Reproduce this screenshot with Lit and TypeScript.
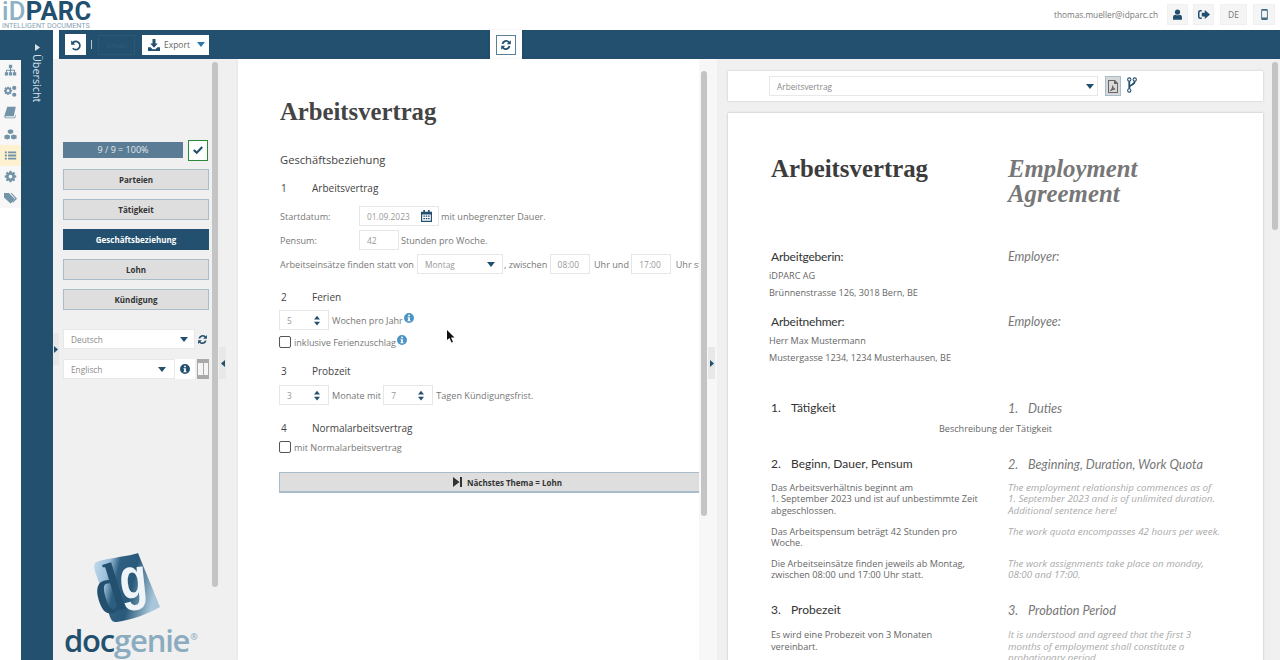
import { LitElement, html, css, svg } from "lit";
import { customElement } from "lit/decorators.js";

const ic = (w: number, h: number, vb: string, body: unknown, cls = "") =>
  html`<svg class="ic ${cls}" width=${w} height=${h} viewBox=${vb} fill="currentColor">${body}</svg>`;

const refresh = (s = 12) => ic(s, s, "0 0 16 16", svg`
  <path d="M2.2 6.6A6 6 0 0 1 12.6 3.4L14.4 1.6V7H9L11 5A3.7 3.7 0 0 0 4.6 6.6Z"/>
  <path d="M13.8 9.4A6 6 0 0 1 3.4 12.6L1.6 14.4V9H7L5 11A3.7 3.7 0 0 0 11.4 9.4Z"/>`);
const caret = () => ic(8, 5, "0 0 8 5", svg`<path d="M0 0H8L4 5Z"/>`, "caret");
const info = (s = 11) => ic(s, s, "0 0 16 16", svg`
  <path fill-rule="evenodd" d="M8 0a8 8 0 1 1 0 16A8 8 0 0 1 8 0ZM6.6 2.6v2.6h2.8V2.6ZM5.6 6.6v1.6h1v3.2h-1V13h4.8v-1.6h-1V6.6Z"/>`);
const spin = () => ic(6, 11, "0 0 8 13", svg`<path d="M0 5L4 0L8 5ZM0 8H8L4 13Z"/>`, "spin");

const railIcons = [
  svg`<path d="M6 1h4v4H8.8v2H13.5v3H15v4h-4v-4h1.3V8.2H8.7V10H10v4H6v-4h1.3V8.2H3.7V10H5v4H1v-4h1.5V7H7.2V5H6Z"/>`,
  svg`<path fill-rule="evenodd" d="M6 3l1 .3.8-.7 1.4 1.4-.7.9.4 1 1.1.1v2l-1.1.2-.4 1 .7.9-1.4 1.4-.8-.7-1 .4-.2 1H4l-.1-1-1-.4-.9.7L.6 10.1l.7-.9-.4-1L0 8V6l.9-.1.4-1-.7-.9L2 2.6l.9.7 1-.3.1-1h2ZM5 5.2a1.8 1.8 0 1 0 0 3.6 1.8 1.8 0 0 0 0-3.6Z"/><circle cx="12.6" cy="3.6" r="2.6"/><circle cx="12.6" cy="12" r="2.6"/>`,
  svg`<path d="M4 1h10.5L12 12.5H2.5C1.6 12.5 1.4 14 2.4 14H13l.8-2.8.9.4L13.6 15H2.2C.6 15 .2 13.2.6 11.6Z"/>`,
  svg`<path d="M8 0.5l3.3 1.3v3.4L8 6.5 4.7 5.2V1.8ZM4 7l3.3 1.3v3.5L4 13.2.5 11.8V8.3ZM12 7l3.5 1.3v3.5L12 13.2l-3.3-1.4V8.3Z" transform="translate(0 1)"/>`,
  svg`<path d="M1 3h2.5v2.2H1Zm4 0h10v2.2H5ZM1 6.9h2.5v2.2H1Zm4 0h10v2.2H5ZM1 10.800h2.500V13H1Zm4 0h10V13H5Z"/>`,
  svg`<path fill-rule="evenodd" d="M6.800 1h2.400l.3 1.800 1.100.5 1.500-1 1.700 1.700-1 1.500.5 1.100 1.800.3v2.400l-1.800.3-.5 1.100 1 1.500-1.700 1.700-1.500-1-1.100.5-.3 1.800H6.800l-.3-1.800-1.100-.5-1.500 1-1.700-1.700 1-1.500-.5-1.100L.9 9.300V6.900l1.800-.3.5-1.100-1-1.500 1.700-1.700 1.500 1 1.100-.5ZM8 5.800a2.300 2.300 0 1 0 0 4.600 2.300 2.300 0 0 0 0-4.600Z"/>`,
  svg`<path d="M0 2.500h6l7.500 7.500-5.500 5.500L0 8Z" /><path d="M8 2.500h1.500L16 9.500l-5 5-1-1 4-4Z"/>`,
];

@customElement("app-root")
export class AppRoot extends LitElement {
  static styles = css`
    :host { display: block; width: 1280px; height: 660px; overflow: hidden; background: #fff;
      font-family: "Open Sans", sans-serif; color: #777; position: relative; }
    .ic { display: block; flex: none; }

    .top { height: 30px; display: flex; align-items: flex-start; justify-content: space-between; }
    .logo { padding: 0 0 0 2px; width: 100px; }
    .logo-main { font: 700 25.500px/23px "Roboto", sans-serif; letter-spacing: 0.3px; color: #23506f; height: 21px; white-space: nowrap; }
    .logo-main b { color: #8eb0c4; font-weight: 500; }
    .logo-sub { font: 400 7.200px/7px "Roboto", sans-serif; color: #8aa3b3; white-space: nowrap; margin-top: 1px; }
    .user { display: flex; align-items: center; gap: 5px; height: 21px; margin-top: 4px; padding-right: 5px; }
    .email { font-size: 8.300px; color: #777; margin-right: 4px; }
    .tbtn { width: 21px; height: 21px; background: #f5f5f5; display: flex; align-items: center; justify-content: center; color: #23506f; font-size: 8.500px; box-shadow: 0 0 0 1px #f0f0f0 inset; }
    .tbtn.de { width: 27px; color: #777; margin: 0 1px; }
    .tbtn.mob { width: 22px; color: #3f6b88; }

    .body { display: flex; height: 630px; }
    .rail { width: 21px; flex: none; display: flex; flex-direction: column; }
    .rail-top { height: 30px; background: #23506f; }
    .rail-item { height: 21.200px; display: flex; align-items: center; justify-content: center; color: #7393a8; background: #f7f7f7; }
    .rail-item.on { background: #fdf1cf; }
    .nav { width: 32px; flex: none; background: #23506f; color: #d7e2e9; display: flex; flex-direction: column; align-items: center; padding-top: 14px; box-sizing: border-box; }
    .nav-label { writing-mode: vertical-rl; font-size: 10.800px; margin-top: 3px; line-height: 16px; }

    .work { flex: 1; min-width: 0; display: flex; flex-direction: column; }
    .bar { height: 29px; margin-left: 6px; background: #23506f; display: flex; align-items: center; flex: none; padding-left: 6px; }
    .undo { width: 21px; height: 21px; background: #fff; color: #23506f; display: flex; align-items: center; justify-content: center; }
    .sep { width: 1px; height: 9px; background: #b8c8d3; margin: 0 6px 0 5px; }
    .ghost { width: 37px; height: 20px; border: 1px solid #2c5873; box-sizing: border-box; color: #2f5b76; font-size: 8px; display: flex; align-items: center; justify-content: center; margin-right: 7px; }
    .export { width: 67px; height: 20px; background: #fff; color: #23506f; display: flex; align-items: center; gap: 4px; padding-left: 6px; box-sizing: border-box; font-size: 8.500px; }
    .export span { color: #666; }
    .export .caret { color: #2a78a8; margin-left: 3px; }
    .syncwrap { width: 32px; height: 30px; background: #fff; margin-left: 281px; display: flex; align-items: center; justify-content: center; box-shadow: 0 1px 3px rgba(0,0,0,.15); align-self: flex-start; }
    .sync { width: 20px; height: 20px; border: 1px solid #5d7f96; box-sizing: border-box; color: #23506f; display: flex; align-items: center; justify-content: center; }

    .panels { flex: 1; display: flex; min-height: 0; position: relative; }
    .side { width: 165px; flex: none; background: #f0f0f0; padding: 0 0 0 10px; box-sizing: border-box; position: relative; display: flex; flex-direction: column; }
    .side-in { width: 146px; padding-top: 80px; display: flex; flex-direction: column; }
    .prog-row { display: flex; align-items: center; justify-content: space-between; height: 22px; margin-bottom: 8px; }
    .prog { width: 120px; height: 16px; background: #5a7c95; color: #e3eaee; font-size: 9px; text-align: center; line-height: 16px; }
    .check { width: 20px; height: 21px; background: #fff; border: 1px solid #2a8a3a; box-sizing: border-box; color: #23506f; display: flex; align-items: center; justify-content: center; margin-right: 1px; }
    .navbtn { height: 21px; box-sizing: border-box; background: #dedede; border: 1px solid #a9bcc9; color: #333; font-size: 8px; font-weight: 700; text-align: center; line-height: 19px; margin-bottom: 9px; }
    .navbtn.on { background: #23506f; border-color: #23506f; color: #fff; }
    .langs { margin-top: 10px; display: flex; flex-direction: column; gap: 10px; }
    .lang { height: 20px; display: flex; align-items: stretch; }
    .sel { background: #fff; border: 1px solid #e8e8e8; box-sizing: border-box; display: flex; align-items: center; justify-content: space-between; padding: 0 6px 0 7px; font-size: 8.300px; color: #8a8a8a; }
    .sel .caret { color: #23506f; }
    .lang .sel { flex: 1; }
    .lang .sel.short { padding-right: 8px; }
    .lang-btn { width: 13px; margin-left: 1px; display: flex; align-items: center; justify-content: center; color: #23506f; }
    .info-btn { width: 20px; background: #fff; display: flex; align-items: center; justify-content: center; color: #23506f; margin-right: 2px; }
    .pause { width: 12px; background: #a9a9a9; display: flex; align-items: center; justify-content: center; gap: 1px; }
    .pause i { width: 4.500px; height: 12px; background: #f5f5f5; display: block; }
    .dg-wrap { flex: 1; display: flex; flex-direction: column; align-items: flex-start; justify-content: flex-end; padding-bottom: 5px; margin-left: 1px; }
    .dg { display: block; margin-left: 29px; }
    .dg-name { font: 600 31px/30px "Open Sans", sans-serif; letter-spacing: -1.200px; color: #23506f; white-space: nowrap; margin-top: 1px; }
    .dg-name b { font-weight: 600; color: #8bacbf; }
    .dg-name sup { font-size: 9px; letter-spacing: 0; color: #8bacbf; vertical-align: 12px; line-height: 0; margin-left: 1px; }
    .thumb { position: absolute; width: 6px; background: #c4c4c4; border-radius: 3px; }
    .side .thumb { right: 0; top: 3px; height: 525px; }
    .handle { position: absolute; width: 7px; height: 32px; background: #e8e8e8; color: #23506f; display: flex; align-items: center; justify-content: center; }

    .gap { width: 20px; flex: none; background: #f0f0f0; }
    .main { width: 461px; flex: none; background: #fff; padding: 0 0 0 42px; box-sizing: border-box; overflow: hidden; white-space: nowrap; font-size: 9.100px; box-shadow: 0 0 3px rgba(0,0,0,.08); }
    .main h1 { font: 700 24.700px/30px "Liberation Serif", serif; color: #444; margin: 38px 0 0 0; }
    .main h2 { font-weight: 400; font-size: 11.200px; line-height: 18px; color: #444; margin: 24px 0 0 0; }
    .sec { display: flex; font-size: 10px; line-height: 16px; color: #444; margin-top: 11px; }
    .sec span:first-child { width: 32px; padding-left: 1px; box-sizing: border-box; }
    .row { display: flex; align-items: center; height: 24px; }
    .lab { width: 79px; flex: none; }
    .inp { height: 20px; border: 1px solid #e6e6e6; box-sizing: border-box; display: flex; align-items: center; justify-content: space-between; padding: 0 6px 0 7px; color: #999; font-size: 8.400px; background: #fff; flex: none; margin-right: 2px; }
    .inp .ic { color: #23506f; }
    .cal { color: #3f6b88 !important; }
    .w40 { width: 40px; } .w50 { width: 50px; padding-right: 8px; margin-right: 3px; } .w80 { width: 80px; } .w86 { width: 86px; color: #999; margin: 0 1px 0 3px; padding-right: 7px; }
    .inp.first { margin-left: -1px; }
    .chk { display: flex; align-items: center; height: 20px; margin-left: -1px; }
    .box { width: 12px; height: 12px; border: 1px solid #555; border-radius: 2px; box-sizing: border-box; margin-right: 3px; background: #fff; }
    .blue { color: #4d93c4; margin: -4px 0 0 1px; }
    .next { height: 21px; margin: 15px 0 0 -1px; width: 456px; background: #dedede; border: 1px solid #a9bcc9; border-bottom-width: 2px; border-right: 0; box-sizing: border-box; display: flex; align-items: center; justify-content: center; gap: 5px; color: #333; font-size: 8px; font-weight: 700; }

    .main-scroll { width: 18px; flex: none; background: #f7f7f7; position: relative; }
    .main-scroll .thumb { left: 2px; top: 12px; height: 445px; }
    .right { flex: 1; min-width: 0; background: #f0f0f0; padding: 12px 17px 0 11px; position: relative; }
    .dochead { height: 30px; background: #fff; box-shadow: 0 0 2px rgba(0,0,0,.2); display: flex; align-items: center; padding-left: 41px; gap: 7px; }
    .dochead .sel { width: 329px; height: 20px; padding-right: 3px; }
    .pdf { width: 16px; height: 20px; background: #d8d8d8; border: 1px solid #a9bcc9; box-sizing: border-box; color: #666; display: flex; align-items: center; justify-content: center; margin-right: -1px; }
    .fork { color: #23506f; margin-top: -3px; }
    .right .thumb { right: 2px; top: 3px; height: 168px; }
    .doc { margin-top: 12px; height: 560px; background: #fff; box-shadow: 0 0 2px rgba(0,0,0,.25); padding: 40px 0 0 41px; box-sizing: border-box; overflow: hidden; display: grid; grid-template-columns: 239px 214px; align-content: start; font-size: 9.200px; line-height: 11.400px; color: #666; }
    .doc h1 { font: 700 24.800px/24.500px "Liberation Serif", serif; color: #3c3c3c; margin: 4px 0 0 2px; }
    .doc h1.en { font-style: italic; color: #777; margin-left: 0; }
    .lbl { font: 400 12px/14px "Lato", sans-serif; letter-spacing: -0.200px; color: #333; margin-top: 44px; padding-left: 2px; }
    .lbl.en { font-size: 12.500px; letter-spacing: 0; font-style: italic; color: #777; padding-left: 0; }
    .addr { font-size: 9.100px; line-height: 17px; margin: 3px 0 0 0; }
    .hd { font: 400 12px/16px "Lato", sans-serif; color: #333; margin-top: 20px; display: flex; padding-left: 2px; }
    .hd span:first-child { width: 20px; flex: none; }
    .hd.en { font-size: 12.700px; color: #777; font-style: italic; padding-left: 0; }
    .center { grid-column: 1 / -1; text-align: center; font-size: 9.100px; margin-top: 6px; line-height: 14px; }
    .p { margin-top: 10px; padding-left: 2px; }
    .p.en { font-style: italic; font-size: 9.800px; color: #aaa; padding-left: 0; white-space: nowrap; }
    .p p { margin: 0 0 9.500px 0; min-height: 22.800px; }
    .p p.three { min-height: 34.200px; }
    .cursor { position: absolute; left: 447px; top: 330px; color: #111; }
  `;

  render() {
    return html`
      <div class="top">
        <div class="logo">
          <div class="logo-main"><b>iD</b>PARC</div>
          <div class="logo-sub">INTELLIGENT DOCUMENTS</div>
        </div>
        <div class="user">
          <span class="email">thomas.mueller@idparc.ch</span>
          <div class="tbtn">${ic(11, 11, "0 0 16 16", svg`<circle cx="8" cy="4.500" r="3.800"/><path d="M1.500 15.500V12c0-2.500 2-3.500 3.500-3.500 1 1 5 1 6 0 1.500 0 3.500 1 3.500 3.500v3.500Z"/>`)}</div>
          <div class="tbtn">${ic(12, 11, "0 0 16 14", svg`<path d="M5 1H3a3 3 0 0 0-3 3v6a3 3 0 0 0 3 3h2v-2H3a1 1 0 0 1-1-1V4a1 1 0 0 1 1-1h2Z"/><path d="M9 1l7 6-7 6V9.500H5v-5h4Z"/>`)}</div>
          <div class="tbtn de">DE</div>
          <div class="tbtn mob">${ic(7, 11, "0 0 9 15", svg`<path fill-rule="evenodd" d="M1.500 0h6A1.500 1.500 0 0 1 9 1.500v12A1.500 1.500 0 0 1 7.500 15h-6A1.500 1.500 0 0 1 0 13.500v-12A1.500 1.500 0 0 1 1.500 0ZM1.200 2.500v9h6.600v-9Z"/>`)}</div>
        </div>
      </div>
      <div class="body">
        <div class="rail">
          <div class="rail-top"></div>
          ${railIcons.map((b, i) => html`<div class="rail-item ${i === 4 ? "on" : ""}">${ic(13, 13, "0 0 16 16", b)}</div>`)}
        </div>
        <div class="nav">
          ${ic(5, 7, "0 0 5 7", svg`<path d="M0 0L5 3.500L0 7Z"/>`)}
          <div class="nav-label">Übersicht</div>
        </div>
        <div class="work">
          <div class="bar">
            <div class="undo">${ic(12, 12, "0 0 16 16", svg`<path d="M1.500 2v5.500H7L5 5.500A4.200 4.200 0 1 1 4.600 11.500L2.800 13.100A6.600 6.600 0 1 0 3.300 3.800Z"/>`)}</div>
            <div class="sep"></div>
            <div class="ghost">Email</div>
            <div class="export">
              ${ic(12, 12, "0 0 16 16", svg`<path d="M6 0h4v6h3L8 11.500 3 6h3ZM0 11h3.500L6 13.500h4L12.500 11H16v5H0Z"/>`)}
              <span>Export</span>${caret()}
            </div>
            <div class="syncwrap"><div class="sync">${refresh(12)}</div></div>
          </div>
          <div class="panels">
            <div class="side">
              <div class="side-in">
                <div class="prog-row">
                  <div class="prog">9 / 9 = 100%</div>
                  <div class="check">${ic(10, 9, "0 0 12 10", svg`<path d="M0 5.200L1.800 3.400 4.500 6 10.200 0 12 1.800 4.500 9.500Z"/>`)}</div>
                </div>
                <div class="navbtn">Parteien</div>
                <div class="navbtn">Tätigkeit</div>
                <div class="navbtn on">Geschäftsbeziehung</div>
                <div class="navbtn">Lohn</div>
                <div class="navbtn">Kündigung</div>
                <div class="langs">
                  <div class="lang"><div class="sel"><span>Deutsch</span>${caret()}</div><div class="lang-btn">${refresh(11)}</div></div>
                  <div class="lang"><div class="sel short"><span>Englisch</span>${caret()}</div><div class="info-btn">${info(10)}</div><div class="pause"><i></i><i></i></div></div>
                </div>
              </div>
              <div class="dg-wrap">
                <svg class="dg" width="68" height="72" viewBox="0 0 68 72">
                  <defs>
                    <linearGradient id="pg" x1="0" y1="0" x2="1" y2="0.250">
                      <stop offset="0" stop-color="#c4dcee"/><stop offset="0.250" stop-color="#9cc0da"/><stop offset="0.400" stop-color="#2e5f81"/><stop offset="0.650" stop-color="#2a5a7a"/><stop offset="1" stop-color="#a9c6da"/>
                    </linearGradient>
                  </defs>
                  <path d="M2 11C10 6 35 5 45 1L67 55C55 62 38 68 24 70C18 71 17 65 15 58L3 22C1 17 1 13 2 11Z" fill="url(#pg)"/>
                  <text transform="translate(22 60) rotate(-17) scale(.72 1)" font-family="Liberation Serif" font-size="70" font-weight="700" fill="#23506f" text-anchor="middle">d</text>
                  <text transform="translate(42 46) rotate(-6) scale(.78 1)" font-family="Liberation Sans" font-size="58" font-weight="700" fill="#eef4f8" text-anchor="middle">g</text>
                </svg>
                <div class="dg-name">doc<b>genie</b><sup>®</sup></div>
              </div>
              <div class="thumb"></div>
            </div>
            <div class="gap"></div>
            <div class="main">
              <h1>Arbeitsvertrag</h1>
              <h2>Geschäftsbeziehung</h2>
              <div class="sec"><span>1</span><span>Arbeitsvertrag</span></div>
              <div class="row" style="margin-top:8px"><span class="lab">Startdatum:</span><div class="inp w80"><span>01.09.2023</span><span class="cal">${ic(11, 12, "0 0 14 15", svg`<path fill-rule="evenodd" d="M3 0h2v2h4V0h2v2h3v13H0V2h3ZM1.500 5.500v8h11v-8ZM3 7h2v1.500H3Zm3 0h2v1.500H6Zm3 0h2v1.500H9ZM3 10h2v1.500H3Zm3 0h2v1.500H6Zm3 0h2v1.500H9Z"/>`)}</span></div><span>mit unbegrenzter Dauer.</span></div>
              <div class="row"><span class="lab">Pensum:</span><div class="inp w40"><span>42</span></div><span>Stunden pro Woche.</span></div>
              <div class="row"><span>Arbeitseinsätze finden statt von</span><div class="inp w86"><span>Montag</span>${caret()}</div><span>, zwischen&nbsp;</span><div class="inp w40"><span>08:00</span></div><span>&nbsp;Uhr und&nbsp;</span><div class="inp w40"><span>17:00</span></div><span>&nbsp;Uhr statt.</span></div>
              <div class="sec" style="margin-top:13px"><span>2</span><span>Ferien</span></div>
              <div class="row" style="margin-top:3px"><div class="inp w50 first"><span>5</span>${spin()}</div><span>Wochen pro Jahr</span><span class="blue">${info(10)}</span></div>
              <div class="chk"><div class="box"></div><span>inklusive Ferienzuschlag</span><span class="blue">${info(10)}</span></div>
              <div class="sec" style="margin-top:11px"><span>3</span><span>Probzeit</span></div>
              <div class="row" style="margin-top:4px"><div class="inp w50 first"><span>3</span>${spin()}</div><span>Monate mit&nbsp;</span><div class="inp w50"><span>7</span>${spin()}</div><span>Tagen Kündigungsfrist.</span></div>
              <div class="sec" style="margin-top:13px"><span>4</span><span>Normalarbeitsvertrag</span></div>
              <div class="chk" style="margin-top:1px"><div class="box"></div><span>mit Normalarbeitsvertrag</span></div>
              <div class="next">${ic(9, 10, "0 0 9 10", svg`<path d="M0 0L6.500 5 0 10ZM7 0h2v10H7Z"/>`)}<span>Nächstes Thema = Lohn</span></div>
            </div>
            <div class="main-scroll"><div class="thumb"></div></div>
            <div class="right">
              <div class="dochead">
                <div class="sel"><span>Arbeitsvertrag</span>${caret()}</div>
                <div class="pdf">${ic(10, 13, "0 0 10 13", svg`<path fill-rule="evenodd" d="M0 0h7l3 3v10H0ZM1 1v11h8V4H6V1ZM4 5.500h1c.3 1.500.8 2.500 2.500 3.500l-.4.800C5.500 9.500 4 10 2.500 11.200L2 10.500C3.800 9 4.400 7 4 5.500Z"/>`)}</div>
                <span class="fork">${ic(10, 16, "0 0 11 17", svg`<path fill="none" stroke="currentColor" stroke-width="2" d="M2.500 4.500V12.500M8.500 4.500C8.500 9 2.500 7.500 2.500 11.500"/><circle cx="2.500" cy="2.500" r="1.800" fill="none" stroke="currentColor" stroke-width="1.200"/><circle cx="8.500" cy="2.500" r="1.800" fill="none" stroke="currentColor" stroke-width="1.200"/><circle cx="2.500" cy="14.500" r="1.800" fill="none" stroke="currentColor" stroke-width="1.200"/>`)}</span>
              </div>
              <div class="doc">
                <h1>Arbeitsvertrag</h1><h1 class="en">Employment Agreement</h1>
                <div class="lbl">Arbeitgeberin:</div><div class="lbl en">Employer:</div>
                <div class="addr">iDPARC AG<br>Brünnenstrasse 126, 3018 Bern, BE</div><div></div>
                <div class="lbl" style="margin-top:14px">Arbeitnehmer:</div><div class="lbl en" style="margin-top:14px">Employee:</div>
                <div class="addr">Herr Max Mustermann<br>Mustergasse 1234, 1234 Musterhausen, BE</div><div></div>
                <div class="hd" style="margin-top:34px"><span>1.</span><span>Tätigkeit</span></div><div class="hd en" style="margin-top:34px"><span>1.</span><span>Duties</span></div>
                <div class="center">Beschreibung der Tätigkeit</div>
                <div class="hd"><span>2.</span><span>Beginn, Dauer, Pensum</span></div><div class="hd en"><span>2.</span><span>Beginning, Duration, Work Quota</span></div>
                <div class="p"><p class="three">Das Arbeitsverhältnis beginnt am<br>1. September 2023 und ist auf unbestimmte Zeit<br>abgeschlossen.</p><p>Das Arbeitspensum beträgt 42 Stunden pro<br>Woche.</p><p>Die Arbeitseinsätze finden jeweils ab Montag,<br>zwischen 08:00 und 17:00 Uhr statt.</p></div>
                <div class="p en"><p class="three">The employment relationship commences as of<br>1. September 2023 and is of unlimited duration.<br>Additional sentence here!</p><p>The work quota encompasses 42 hours per week.</p><p>The work assignments take place on monday,<br>08:00 and 17:00.</p></div>
                <div class="hd" style="margin-top:12px"><span>3.</span><span>Probezeit</span></div><div class="hd en" style="margin-top:12px"><span>3.</span><span>Probation Period</span></div>
                <div class="p" style="margin-top:11px"><p>Es wird eine Probezeit von 3 Monaten<br>vereinbart.</p></div>
                <div class="p en" style="margin-top:11px"><p>It is understood and agreed that the first 3<br>months of employment shall constitute a<br>probationary period.</p></div>
              </div>
              <div class="thumb"></div>
            </div>
            <div class="handle" style="left:0;top:274px;width:6px">${ic(4, 7, "0 0 4 7", svg`<path d="M0 0L4 3.500L0 7Z"/>`)}</div>
            <div class="handle" style="left:166px;top:288px">${ic(4, 7, "0 0 4 7", svg`<path d="M4 0L0 3.500L4 7Z"/>`)}</div>
            <div class="handle" style="left:655px;top:288px">${ic(4, 7, "0 0 4 7", svg`<path d="M0 0L4 3.500L0 7Z"/>`)}</div>
          </div>
        </div>
      </div>
      <svg class="cursor" width="8" height="13" viewBox="0 0 8 13"><path d="M0 0V10L2.500 8 4.500 12.500 6 12 4 7.500H7.500Z" fill="currentColor"/></svg>
    `;
  }
}
